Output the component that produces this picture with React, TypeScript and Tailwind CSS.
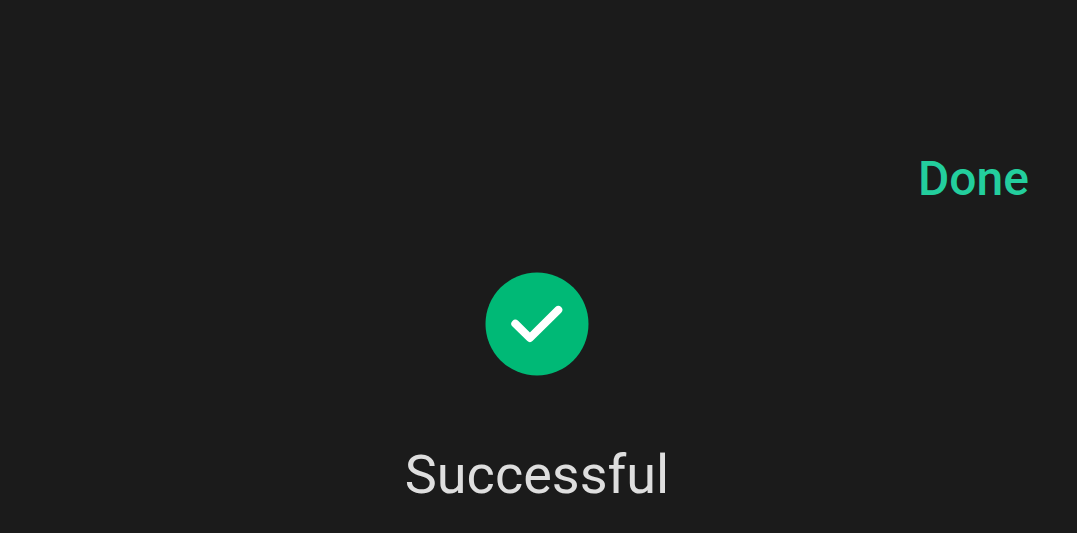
import React from 'react';

function SuccessIcon() {
  return (
    <svg width="104" height="104" viewBox="0 0 104 104" fill="none" aria-hidden="true">
      <circle cx="52" cy="52" r="51.5" fill="#00B976" />
      <path d="M30.3 51.7L44.9 66L73.3 37.9" stroke="#FFFFFF" strokeWidth="8" strokeLinecap="round" strokeLinejoin="round" />
    </svg>
  );
}

export default function App() {
  return (
    <div className="w-full h-[533px] bg-[#1b1b1b] flex flex-col overflow-hidden font-[Roboto,sans-serif]">
      <header className="flex justify-end pt-[151px] pr-12">
        <button type="button" className="text-[48px] leading-[56px] font-medium text-[#23ce9d]">
          Done
        </button>
      </header>

      <main className="flex flex-col items-center pt-[65px] pr-[3px]">
        <SuccessIcon />
        <h1 className="mt-[67px] text-[54px] leading-[64px] font-normal text-[#dedede]">Successful</h1>
      </main>
    </div>
  );
}
